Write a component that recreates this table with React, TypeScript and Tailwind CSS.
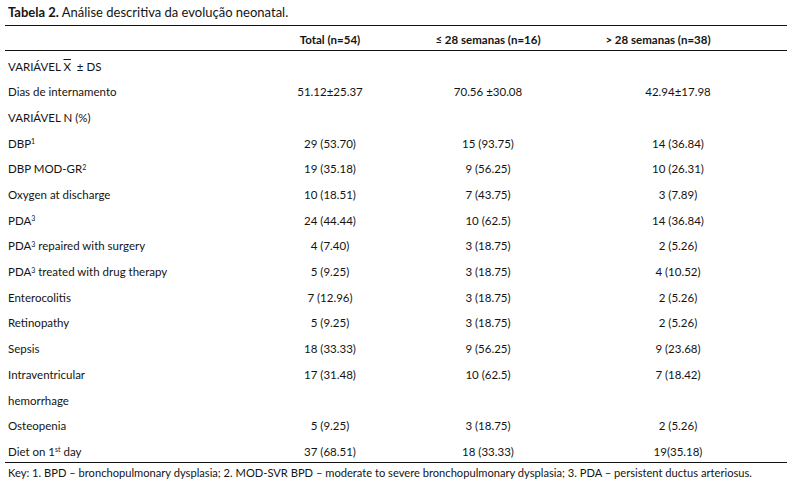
const rows: { label: React.ReactNode; total?: string; le28?: string; gt28?: string }[] = [
  {
    label: (
      <>
        VARIÁVEL <span className="overline">X</span>&nbsp; ± DS
      </>
    ),
  },
  { label: "Dias de internamento", total: "51.12±25.37", le28: "70.56 ±30.08", gt28: "42.94±17.98" },
  { label: "VARIÁVEL N (%)" },
  { label: <>DBP<sup className="text-[7px]">1</sup></>, total: "29 (53.70)", le28: "15 (93.75)", gt28: "14 (36.84)" },
  { label: <>DBP MOD-GR<sup className="text-[7px]">2</sup></>, total: "19 (35.18)", le28: "9 (56.25)", gt28: "10 (26.31)" },
  { label: "Oxygen at discharge", total: "10 (18.51)", le28: "7 (43.75)", gt28: "3 (7.89)" },
  { label: <>PDA<sup className="text-[7px]">3</sup></>, total: "24 (44.44)", le28: "10 (62.5)", gt28: "14 (36.84)" },
  { label: <>PDA<sup className="text-[7px]">3</sup> repaired with surgery</>, total: "4 (7.40)", le28: "3 (18.75)", gt28: "2 (5.26)" },
  { label: <>PDA<sup className="text-[7px]">3</sup> treated with drug therapy</>, total: "5 (9.25)", le28: "3 (18.75)", gt28: "4 (10.52)" },
  { label: "Enterocolitis", total: "7 (12.96)", le28: "3 (18.75)", gt28: "2 (5.26)" },
  { label: "Retinopathy", total: "5 (9.25)", le28: "3 (18.75)", gt28: "2 (5.26)" },
  { label: "Sepsis", total: "18 (33.33)", le28: "9 (56.25)", gt28: "9 (23.68)" },
  { label: "Intraventricular", total: "17 (31.48)", le28: "10 (62.5)", gt28: "7 (18.42)" },
  { label: "hemorrhage" },
  { label: "Osteopenia", total: "5 (9.25)", le28: "3 (18.75)", gt28: "2 (5.26)" },
  { label: <>Diet on 1<sup className="text-[7px]">st</sup> day</>, total: "37 (68.51)", le28: "18 (33.33)", gt28: "19(35.18)" },
]

const grid = "grid grid-cols-[245px_160px_156px_221px]"

export default function App() {
  return (
    <div
      className="h-[487px] w-[795px] overflow-hidden bg-white text-[#141414]"
      style={{ fontFamily: "Lato, 'Liberation Sans', sans-serif" }}
    >
      <div className="h-[25px] pl-[8px] pt-[4px] text-[13px] leading-[17px]">
        <b>Tabela 2.</b> Análise descritiva da evolução neonatal.
      </div>

      <div className="mx-[5px] w-[782px] border-y border-[#111] text-[11.5px] leading-[14px]">
        <div className={`${grid} h-[25px] border-b border-[#111] pt-[7px] font-bold`}>
          <div />
          <div className="text-center">Total (n=54)</div>
          <div className="text-center">≤ 28 semanas (n=16)</div>
          <div className="pr-[37px] text-center">&gt; 28 semanas (n=38)</div>
        </div>
        {rows.map((r, i) => (
          <div key={i} className={`${grid} h-[25.7px] pt-[8.6px]`}>
            <div className="whitespace-nowrap pl-[3px]">{r.label}</div>
            <div className="text-center">{r.total}</div>
            <div className="text-center">{r.le28}</div>
            <div className="pl-[3px] text-center">{r.gt28}</div>
          </div>
        ))}
      </div>

      <div className="whitespace-nowrap pl-[8px] pt-[3px] text-[11.15px] leading-[14px]">
        Key: 1. BPD – bronchopulmonary dysplasia; 2. MOD-SVR BPD – moderate to severe bronchopulmonary dysplasia; 3. PDA –
        persistent ductus arteriosus.
      </div>
    </div>
  )
}
